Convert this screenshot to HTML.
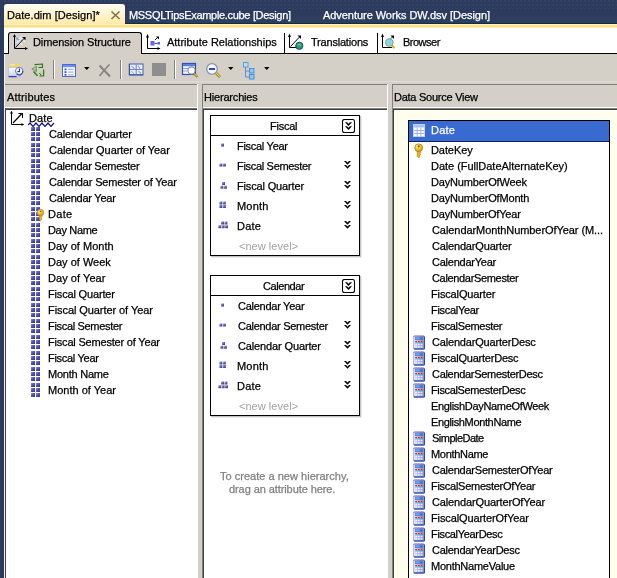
<!DOCTYPE html><html><head><meta charset="utf-8"><title>Date.dim [Design]</title><style>html,body{margin:0;padding:0}
body{width:617px;height:578px;overflow:hidden;position:relative;background:#d4d0c8;font:11px "Liberation Sans",sans-serif;color:#000}
.r{position:absolute}
.t{position:absolute;white-space:nowrap;line-height:16px;will-change:transform;-webkit-text-stroke:.25px currentColor}
#acttab{left:4px;top:4px;width:121px;height:21px;border-radius:3px 3px 0 0;background:linear-gradient(#fffdf4,#fff5d4 45%,#ffeeb4 80%,#fde9a6)}
#seltab{left:8px;top:32px;width:134px;height:22px;box-sizing:border-box;border:1px solid #000;border-bottom:none;border-radius:3px 3px 0 0;background:#d4d0c8}
.hbox{width:150px;height:141px;box-sizing:border-box;border:1px solid #000;background:#fff;box-shadow:1px 1px 0 #c4c4c4,2px 2px 0 #ececec}
</style></head><body>
<svg width="0" height="0" style="position:absolute"><defs>
<g id="i-dim"><path d="M2.500 1.500v13H14.500" fill="none" stroke="#000" stroke-width="1"/><path d="M1 3.500l1.500-2.500 1.500 2.500zM12.500 13l2.500 1.500-2.500 1.500z" fill="#000"/><path d="M4 13l9-9.500" fill="none" stroke="#000" stroke-width="1.100"/><path d="M9.500 3.500h4v4.500" fill="none" stroke="#000" stroke-width="1.100"/></g>
<g id="i-squig"><path d="M0 3l2-2 3 3.500 3-3.500 3 3.500 3-3.500 3 3.500 3-3.500 3 3.500 3-3.500" fill="none" stroke="#14148a" stroke-width="1.200"/></g>
<linearGradient id="sqg" x1="0" y1="0" x2="1" y2="1"><stop offset="0" stop-color="#9a9ae0"/><stop offset=".45" stop-color="#5252b4"/><stop offset="1" stop-color="#30308c"/></linearGradient>
<g id="i-attr"><g fill="url(#sqg)"><rect x="1" y="1" width="4" height="4"/><rect x="6" y="1" width="4" height="4"/><rect x="1" y="6" width="4" height="4"/><rect x="6" y="6" width="4" height="4"/><rect x="1" y="11" width="4" height="4"/><rect x="6" y="11" width="4" height="4"/></g></g>
<g id="i-attrkey"><use href="#i-attr"/><use href="#i-key" transform="translate(4.2,1.800) scale(.82)"/></g>
<radialGradient id="kg" cx=".35" cy=".3" r=".8"><stop offset="0" stop-color="#fff3a8"/><stop offset=".5" stop-color="#f2c428"/><stop offset="1" stop-color="#c08a10"/></radialGradient>
<g id="i-key"><path d="M6.300 8.500h2.600v1.200l1 .8-1 1 .9.900-1 1 .2 1.100-1.400 1.300-1.300-1.300z" fill="#ecb820" stroke="#b07c10" stroke-width=".7"/><circle cx="7.700" cy="5.800" r="3.900" fill="url(#kg)" stroke="#b8860f" stroke-width=".9"/><circle cx="7.700" cy="4.300" r="1.100" fill="#8a5c08"/></g>
<linearGradient id="cg" x1="0" y1="0" x2="1" y2="0"><stop offset="0" stop-color="#dfe4f6"/><stop offset=".5" stop-color="#a9b3e6"/><stop offset="1" stop-color="#7f8cd4"/></linearGradient>
<g id="i-calc"><rect x="2.500" y="2" width="11" height="13" rx="1" fill="url(#cg)" stroke="#5666b4" stroke-width="1"/><path d="M2.500 2.500v12" stroke="#b8bccc" stroke-width="1"/><path d="M13.500 3v12M3 15h10.500" stroke="#3a489c" stroke-width="1" fill="none"/><rect x="4" y="3.200" width="8" height="2.600" fill="#3a78d4"/><rect x="4.500" y="3.700" width="4" height="1" fill="#8fc0f4"/><g fill="#d62c34"><rect x="4.300" y="7" width="1.700" height="1.400"/><rect x="7" y="7" width="1.700" height="1.400"/><rect x="9.700" y="7" width="1.700" height="1.400"/></g><g fill="#eef0ff"><rect x="4.300" y="9.600" width="1.700" height="1.500"/><rect x="7" y="9.600" width="1.700" height="1.500"/><rect x="9.700" y="9.600" width="1.700" height="1.500"/><rect x="4.300" y="12.100" width="1.700" height="1.500"/><rect x="7" y="12.100" width="1.700" height="1.500"/><rect x="9.700" y="12.100" width="1.700" height="1.500"/></g><path d="M4 8.900h8" stroke="#58a890" stroke-width=".6"/></g>
<g id="i-table"><rect x="1.500" y=".5" width="11" height="12" fill="#fff" stroke="#c4d2f4" stroke-width="1"/><rect x="2" y="1" width="10" height="2.500" fill="#aac0f2"/><path d="M5.200 3.500v9M8.800 3.500v9M2 6.500h10M2 9.500h10" stroke="#9cb2e8" fill="none" stroke-width="1"/></g>
<g id="i-chev"><path d="M0 0h2l1.500 1.600L5 0h2L3.500 3.700zM0 4h2l1.500 1.600L5 4h2L3.500 7.700z" fill="#000"/></g>
<g id="i-chevbox"><rect x=".5" y=".5" width="12" height="13" rx="2" fill="#fff" stroke="#000" stroke-width="1.100"/><path d="M3 3.200h2l1.500 1.600L8 3.200h2L6.500 6.900zM3 7.200h2l1.500 1.600L8 7.200h2L6.500 10.900z" fill="#000"/></g>
<linearGradient id="dg" x1="0" y1="0" x2="1" y2="1"><stop offset="0" stop-color="#c4c4e8"/><stop offset=".45" stop-color="#6a6ab0"/><stop offset="1" stop-color="#2c2c80"/></linearGradient>
<g id="i-lv1"><rect x="3" y="4.5" width="3" height="3" fill="url(#dg)"/></g>
<g id="i-lv2"><rect x="1.3" y="4.5" width="3" height="3" fill="url(#dg)"/><rect x="4.8" y="4.5" width="3" height="3" fill="url(#dg)"/></g>
<g id="i-lv3"><rect x="4" y="3" width="3" height="3" fill="url(#dg)"/><rect x="2.3" y="6.7" width="3" height="3" fill="url(#dg)"/><rect x="5.8" y="6.7" width="3" height="3" fill="url(#dg)"/></g>
<g id="i-lv4"><rect x="1.3" y="2.5" width="3" height="3" fill="url(#dg)"/><rect x="4.8" y="2.5" width="3" height="3" fill="url(#dg)"/><rect x="1.3" y="6" width="3" height="3" fill="url(#dg)"/><rect x="4.8" y="6" width="3" height="3" fill="url(#dg)"/></g>
<g id="i-lv5"><rect x="3" y="2.5" width="3" height="3" fill="url(#dg)"/><rect x="6.4" y="2.5" width="3" height="3" fill="url(#dg)"/><rect x="0.2" y="6.2" width="3" height="3" fill="url(#dg)"/><rect x="3.6" y="6.2" width="3" height="3" fill="url(#dg)"/><rect x="7" y="6.2" width="3" height="3" fill="url(#dg)"/></g>
</defs></svg>

<div class="r" style="left:0px;top:0px;width:617px;height:24px;background:#2d3c5e;"></div>
<div class="r" style="left:0px;top:0px;width:617px;height:9px;background:radial-gradient(circle at 1px 1px,rgba(255,255,255,.035) 0,rgba(255,255,255,.035) 1px,transparent 1.4px) 0 0/4px 4px;"></div>
<div class="r" style="left:0px;top:17px;width:617px;height:2px;background:#343a59;"></div>
<div class="r" style="left:0px;top:19px;width:617px;height:4px;background:#254060;"></div>
<div class="r" style="left:0px;top:23px;width:617px;height:1px;background:#1c2a3c;"></div>
<div class="r" id="acttab"></div>
<div class="r" style="left:4px;top:24px;width:613px;height:4px;background:linear-gradient(#fff0c0 0,#fff0c0 25%,#fbe08c 25%,#fbe08c 75%,#fdeeb8 75%);"></div>
<div class="r" style="left:4px;top:28px;width:613px;height:26px;background:#fff;"></div>
<div class="r" style="left:0px;top:0px;width:4px;height:578px;background:#2d3c5e;"></div>
<div class="r" style="left:4px;top:54px;width:1px;height:524px;background:#f2f1ec;"></div>
<span class="t" style="left:6.8px;top:7px;letter-spacing:0.070px;">Date.dim [Design]*</span>
<svg class="r" style="left:110px;top:10px" width="11" height="10"><path d="M1.500 1.500l8 7.500M9.500 1.500l-8 7.500" stroke="#7e6e44" stroke-width="1.500" fill="none"/></svg>
<span class="t" style="left:128.7px;top:7px;letter-spacing:-0.316px;color:#fff">MSSQLTipsExample.cube [Design]</span>
<span class="t" style="left:323.0px;top:7px;letter-spacing:-0.050px;color:#fff">Adventure Works DW.dsv [Design]</span>
<div class="r" style="left:4px;top:53px;width:613px;height:1px;background:#000;"></div>
<div class="r" id="seltab"></div>
<span class="t" style="left:33.4px;top:34px;letter-spacing:-0.102px;">Dimension Structure</span>
<span class="t" style="left:167.3px;top:34px;letter-spacing:-0.014px;">Attribute Relationships</span>
<span class="t" style="left:310.7px;top:34px;letter-spacing:-0.200px;">Translations</span>
<span class="t" style="left:403.0px;top:34px;letter-spacing:-0.500px;">Browser</span>
<div class="r" style="left:284px;top:33px;width:1px;height:20px;background:#000;"></div>
<div class="r" style="left:377px;top:33px;width:1px;height:20px;background:#000;"></div>
<!-- tab icons -->
<svg class="r" style="left:12px;top:33px" width="17" height="17" viewBox="0 0 17 17"><path d="M5 6l5-3 3 1 1 4-4 4-5-1z" fill="#e6ecf8" opacity=".8"/><path d="M9 7l4 5" stroke="#d8cf9a" stroke-width="2"/><path d="M4 5l3 2" stroke="#7fa0e0" stroke-width="2"/><path d="M2.5 2v13.5H15" fill="none" stroke="#000"/><path d="M1 4l1.5-3L4 4zM13 14l3 1.5-3 1.5z" fill="#000"/><path d="M3.5 14.500l8-8.500" stroke="#000" fill="none"/><path d="M10 4h3.500v3.500z" fill="#000"/></svg>
<svg class="r" style="left:145px;top:33px" width="17" height="17" viewBox="0 0 17 17"><path d="M2.500 2v13.500H15" fill="none" stroke="#000"/><path d="M1 4.500l1.500-3.500L4 4.500zM12.500 14l3 1.500-3 1.500z" fill="#000"/><rect x="5.500" y="8" width="4" height="4.500" fill="#6464ec"/><rect x="12.500" y="9" width="2.500" height="2.500" fill="#5a5ae0"/><path d="M9.500 10.500h3" stroke="#4848d0"/><path d="M10 7l3-3" stroke="#000"/><path d="M11 3.500h3v3z" fill="#000"/></svg>
<svg class="r" style="left:287px;top:33px" width="18" height="17" viewBox="0 0 18 17"><path d="M2.500 2v12.500H9" fill="none" stroke="#000"/><path d="M1 4l1.500-3.500L4 4z" fill="#000"/><path d="M3.500 13.500l9-9.500" stroke="#000"/><path d="M10.500 2.500h3.500v3.500z" fill="#000"/><circle cx="12.300" cy="12.800" r="3.600" fill="#22a860" stroke="#1c3c9c" stroke-width="1"/><path d="M10.500 12q2-1.500 3.500.5" stroke="#7be0a0" fill="none"/></svg>
<svg class="r" style="left:380px;top:33px" width="18" height="17" viewBox="0 0 18 17"><path d="M2.500 2v12.500H12" fill="none" stroke="#000"/><path d="M1 4l1.500-3.500L4 4z" fill="#000"/><circle cx="9.300" cy="9.500" r="3.800" fill="#84dcdc" stroke="#8a9aa0" stroke-width="1"/><path d="M11 5.500l1.500-1.500" stroke="#000"/><path d="M10.500 2.500h3.500v3.500z" fill="#000"/><path d="M12 12.500l2.500 2.500" stroke="#d8b400" stroke-width="2.200"/></svg>
<!-- toolbar -->
<svg class="r" style="left:8px;top:62px" width="17" height="17" viewBox="0 0 17 17"><defs><linearGradient id="bx" x1="0" y1="0" x2="0" y2="1"><stop offset="0" stop-color="#ffffff"/><stop offset="1" stop-color="#c9d0f4"/></linearGradient></defs><rect x="1.500" y="1.800" width="11" height="3.600" rx="1.200" fill="#ead668"/><rect x="2" y="2.200" width="5" height="1.400" fill="#f6eca0"/><rect x=".8" y="5.300" width="11.500" height="9.500" fill="url(#bx)" stroke="#aab2e4" stroke-width=".6"/><path d="M.6 14.600h8" stroke="#3a44a8" stroke-width="1.300"/><circle cx="11.200" cy="9" r="3.700" fill="#fbfcff" stroke="#6a74cc" stroke-width="1"/><path d="M8.800 12a3.700 3.700 0 0 0 6.100-3" fill="none" stroke="#3c469c" stroke-width="1.200"/><path d="M11.500 6.600v3h-2.200" stroke="#2c3690" stroke-width="1.200" fill="none"/></svg>
<svg class="r" style="left:30px;top:62px" width="16" height="16" viewBox="0 0 16 16"><rect x="9.300" y="2.800" width="3" height="2.400" fill="#b4dc98"/><rect x="10" y="9.500" width="3.200" height="4.300" fill="#b4dc98"/><path d="M4.500 2.600L12.500 2V5.500H8.500" fill="none" stroke="#3f6e2c" stroke-width="1.100"/><path d="M13.600 7.400V14H9.500" fill="none" stroke="#3f6e2c" stroke-width="1.200"/><path d="M1.800 7l4.700-2.800v5.300z" fill="#9ccc80" stroke="#5a8a44" stroke-width=".7"/><path d="M3.500 9.500L7.500 13.800" stroke="#3f6e2c" stroke-width="1.500"/><path d="M9.300 11l2 2.500" stroke="#3f6e2c" stroke-width="1"/></svg>
<svg class="r" style="left:61px;top:63px" width="16" height="15" viewBox="0 0 16 15"><rect x="1.500" y="1.500" width="13" height="12" fill="#fbfcff" stroke="#4c6ad6" stroke-width="1"/><rect x="2" y="2" width="12" height="2.200" fill="#6f8fe8"/><g fill="#3c58c0"><rect x="3.500" y="5.500" width="2" height="1.800"/><rect x="3.500" y="8.200" width="2" height="1.800"/><rect x="3.500" y="10.900" width="2" height="1.800"/></g><path d="M7 6.400h5.500M7 9.100h5.500M7 11.800h5.500" stroke="#a2b4ec" stroke-width="1.200"/></svg>
<svg class="r" style="left:84px;top:67px" width="6" height="4"><path d="M0 0h5.500L2.750 3z" fill="#000"/></svg>
<svg class="r" style="left:98px;top:63px" width="14" height="15" viewBox="0 0 14 15"><path d="M1.500 2.500l10.500 11" stroke="#858585" stroke-width="2" fill="none"/><path d="M11.500 1.500Q7 6 1.500 13" stroke="#858585" stroke-width="1.700" fill="none"/></svg>
<svg class="r" style="left:128px;top:63px" width="16" height="13" viewBox="0 0 16 13"><rect x="1.500" y="1" width="13.500" height="11" fill="#eef1fc" stroke="#5a70bc" stroke-width="1.200"/><path d="M1.500 11.800h13.500M1.300 1v11" stroke="#3c4e96" stroke-width="1" fill="none"/><path d="M8.200 1.500v10M2 6.500h12.500" stroke="#6c84d0" stroke-width="1.100"/><path d="M3.500 3l3 3M10 2.500l2 3.500M3.500 8l2.500 3M10.500 8l2.500 2.500" stroke="#93a4de" stroke-width="1.100"/></svg>
<div class="r" style="left:152px;top:63px;width:14px;height:13px;background:#8e8e8e"></div>
<svg class="r" style="left:181px;top:62px" width="19" height="17" viewBox="0 0 19 17"><rect x="1.500" y="1.500" width="13" height="11" fill="#f4f7ff" stroke="#2f4fb8" stroke-width="1.200"/><rect x="2" y="2" width="12" height="2.200" fill="#5f7fe0"/><path d="M2 6.500h5M2 9h4" stroke="#8aa0e0"/><circle cx="10.500" cy="8.500" r="3.600" fill="#fff" stroke="#7a8aa8" stroke-width="1.100"/><path d="M13 11.500l3.500 3.500" stroke="#a08420" stroke-width="2.300"/><path d="M13 11.300l3.300 3.300" stroke="#e8c840" stroke-width="1"/></svg>
<svg class="r" style="left:205px;top:62px" width="17" height="17" viewBox="0 0 17 17"><circle cx="7" cy="7" r="5.300" fill="#f6f8ff" stroke="#8894b0" stroke-width="1.300"/><path d="M4 7h6" stroke="#3848b8" stroke-width="2"/><path d="M11 11l4 4" stroke="#9a8020" stroke-width="2.600"/><path d="M11 10.800l3.800 3.800" stroke="#ecd050" stroke-width="1.100"/></svg>
<svg class="r" style="left:228px;top:67px" width="6" height="4"><path d="M0 0h5.500L2.750 3z" fill="#000"/></svg>
<svg class="r" style="left:242px;top:61px" width="14" height="19" viewBox="0 0 14 19"><path d="M3.500 5v11h4M3.500 10h4" fill="none" stroke="#6a8ad0" stroke-width="1"/><rect x="1.500" y="1.500" width="4.500" height="4.500" fill="#bfe0fa" stroke="#5a9ad8"/><rect x="7.500" y="7.500" width="4.500" height="4.500" fill="#8cc8f4" stroke="#4a90d8"/><rect x="7.500" y="13.500" width="4.500" height="4.500" fill="#8cc8f4" stroke="#4a90d8"/></svg>
<svg class="r" style="left:264px;top:67px" width="6" height="4"><path d="M0 0h5.500L2.750 3z" fill="#000"/></svg>

<div class="r" style="left:5px;top:81px;width:612px;height:1px;background:#e0ddd6;"></div>
<div class="r" style="left:5px;top:84px;width:612px;height:1px;background:#808080;"></div>
<div class="r" style="left:53px;top:60px;width:1px;height:19px;background:#808080;box-shadow:1px 0 0 #fff"></div>
<div class="r" style="left:120px;top:60px;width:1px;height:19px;background:#808080;box-shadow:1px 0 0 #fff"></div>
<div class="r" style="left:174px;top:60px;width:1px;height:19px;background:#808080;box-shadow:1px 0 0 #fff"></div>
<div class="r" style="left:5px;top:107px;width:192px;height:1px;background:#fff;"></div>
<div class="r" style="left:202px;top:107px;width:185px;height:1px;background:#fff;"></div>
<div class="r" style="left:392px;top:107px;width:225px;height:1px;background:#fff;"></div>
<div class="r" style="left:197px;top:84px;width:1px;height:494px;background:#fff;"></div>
<div class="r" style="left:387px;top:84px;width:1px;height:494px;background:#fff;"></div>
<div class="r" style="left:198px;top:84px;width:4px;height:1px;background:#d4d0c8;"></div>
<div class="r" style="left:388px;top:84px;width:4px;height:1px;background:#d4d0c8;"></div>
<div class="r" style="left:202px;top:84px;width:1px;height:24px;background:#808080;"></div>
<div class="r" style="left:392px;top:84px;width:1px;height:24px;background:#808080;"></div>
<span class="t" style="left:7.3px;top:89px;letter-spacing:0.184px;">Attributes</span>
<span class="t" style="left:204.3px;top:89px;letter-spacing:-0.183px;">Hierarchies</span>
<span class="t" style="left:394.3px;top:89px;letter-spacing:-0.256px;">Data Source View</span>
<div class="r" style="left:5px;top:108px;width:192px;height:470px;background:#fff;border-top:2px solid #404040;border-left:1px solid #404040;border-top-color:#6a6a6a;box-sizing:border-box"></div>
<div class="r" style="left:5px;top:109px;width:192px;height:1px;background:#404040;"></div>
<svg class="r" style="left:9px;top:110px" width="16" height="16"><use href="#i-dim"/></svg>
<span class="t" style="left:28.8px;top:110px;letter-spacing:0.114px;">Date</span>
<svg class="r" style="left:28px;top:122px" width="27" height="5"><use href="#i-squig"/></svg>
<svg class="r" style="left:30px;top:126px" width="16" height="16"><use href="#i-attr"/></svg>
<span class="t" style="left:48.7px;top:126px;letter-spacing:-0.146px;">Calendar Quarter</span>
<svg class="r" style="left:30px;top:142px" width="16" height="16"><use href="#i-attr"/></svg>
<span class="t" style="left:48.7px;top:142px;letter-spacing:-0.065px;">Calendar Quarter of Year</span>
<svg class="r" style="left:30px;top:158px" width="16" height="16"><use href="#i-attr"/></svg>
<span class="t" style="left:48.7px;top:158px;letter-spacing:-0.259px;">Calendar Semester</span>
<svg class="r" style="left:30px;top:174px" width="16" height="16"><use href="#i-attr"/></svg>
<span class="t" style="left:48.7px;top:174px;letter-spacing:-0.174px;">Calendar Semester of Year</span>
<svg class="r" style="left:30px;top:190px" width="16" height="16"><use href="#i-attr"/></svg>
<span class="t" style="left:48.7px;top:190px;letter-spacing:-0.243px;">Calendar Year</span>
<svg class="r" style="left:30px;top:206px" width="16" height="16"><use href="#i-attrkey"/></svg>
<span class="t" style="left:47.7px;top:206px;letter-spacing:0.284px;">Date</span>
<svg class="r" style="left:30px;top:222px" width="16" height="16"><use href="#i-attr"/></svg>
<span class="t" style="left:47.7px;top:222px;letter-spacing:-0.334px;">Day Name</span>
<svg class="r" style="left:30px;top:238px" width="16" height="16"><use href="#i-attr"/></svg>
<span class="t" style="left:47.7px;top:238px;letter-spacing:0.021px;">Day of Month</span>
<svg class="r" style="left:30px;top:254px" width="16" height="16"><use href="#i-attr"/></svg>
<span class="t" style="left:47.7px;top:254px;letter-spacing:0.008px;">Day of Week</span>
<svg class="r" style="left:30px;top:270px" width="16" height="16"><use href="#i-attr"/></svg>
<span class="t" style="left:47.7px;top:270px;letter-spacing:0.051px;">Day of Year</span>
<svg class="r" style="left:30px;top:286px" width="16" height="16"><use href="#i-attr"/></svg>
<span class="t" style="left:47.7px;top:286px;letter-spacing:-0.169px;">Fiscal Quarter</span>
<svg class="r" style="left:30px;top:302px" width="16" height="16"><use href="#i-attr"/></svg>
<span class="t" style="left:47.7px;top:302px;letter-spacing:-0.071px;">Fiscal Quarter of Year</span>
<svg class="r" style="left:30px;top:318px" width="16" height="16"><use href="#i-attr"/></svg>
<span class="t" style="left:47.7px;top:318px;letter-spacing:-0.321px;">Fiscal Semester</span>
<svg class="r" style="left:30px;top:334px" width="16" height="16"><use href="#i-attr"/></svg>
<span class="t" style="left:47.7px;top:334px;letter-spacing:-0.190px;">Fiscal Semester of Year</span>
<svg class="r" style="left:30px;top:350px" width="16" height="16"><use href="#i-attr"/></svg>
<span class="t" style="left:47.7px;top:350px;letter-spacing:-0.292px;">Fiscal Year</span>
<svg class="r" style="left:30px;top:366px" width="16" height="16"><use href="#i-attr"/></svg>
<span class="t" style="left:47.7px;top:366px;letter-spacing:-0.229px;">Month Name</span>
<svg class="r" style="left:30px;top:382px" width="16" height="16"><use href="#i-attr"/></svg>
<span class="t" style="left:47.7px;top:382px;letter-spacing:0.007px;">Month of Year</span>
<div class="r" style="left:202px;top:108px;width:185px;height:470px;background:#fff;border-top:1px solid #808080;border-left:1px solid #808080;box-sizing:border-box"></div>
<div class="r" style="left:203px;top:109px;width:184px;height:1px;background:#404040;"></div>
<div class="r" style="left:203px;top:109px;width:1px;height:469px;background:#404040;"></div>
<div class="r hbox" style="left:210px;top:115px"></div>
<div class="r" style="left:211px;top:135px;width:148px;height:1px;background:#000;"></div>
<span class="t" style="left:270.4px;top:118px;letter-spacing:-0.234px;">Fiscal</span>
<svg class="r" style="left:342px;top:119px" width="14" height="15"><use href="#i-chevbox"/></svg>
<svg class="r" style="left:218px;top:139px" width="12" height="12"><use href="#i-lv1"/></svg>
<span class="t" style="left:236.6px;top:138px;letter-spacing:-0.283px;">Fiscal Year</span>
<svg class="r" style="left:218px;top:159px" width="12" height="12"><use href="#i-lv2"/></svg>
<span class="t" style="left:236.6px;top:158px;letter-spacing:-0.309px;">Fiscal Semester</span>
<svg class="r" style="left:344px;top:161px" width="8" height="9"><use href="#i-chev"/></svg>
<svg class="r" style="left:218px;top:179px" width="12" height="12"><use href="#i-lv3"/></svg>
<span class="t" style="left:236.6px;top:178px;letter-spacing:-0.155px;">Fiscal Quarter</span>
<svg class="r" style="left:344px;top:181px" width="8" height="9"><use href="#i-chev"/></svg>
<svg class="r" style="left:218px;top:199px" width="12" height="12"><use href="#i-lv4"/></svg>
<span class="t" style="left:236.6px;top:198px;letter-spacing:0.208px;">Month</span>
<svg class="r" style="left:344px;top:201px" width="8" height="9"><use href="#i-chev"/></svg>
<svg class="r" style="left:218px;top:219px" width="12" height="12"><use href="#i-lv5"/></svg>
<span class="t" style="left:236.6px;top:218px;letter-spacing:0.226px;">Date</span>
<svg class="r" style="left:344px;top:221px" width="8" height="9"><use href="#i-chev"/></svg>
<span class="t" style="left:239.2px;top:238px;letter-spacing:0.036px;color:#a2a2a2;-webkit-text-stroke:0">&lt;new level&gt;</span>
<div class="r hbox" style="left:210px;top:275px"></div>
<div class="r" style="left:211px;top:295px;width:148px;height:1px;background:#000;"></div>
<span class="t" style="left:263.0px;top:278px;letter-spacing:-0.429px;">Calendar</span>
<svg class="r" style="left:342px;top:279px" width="14" height="15"><use href="#i-chevbox"/></svg>
<svg class="r" style="left:218px;top:299px" width="12" height="12"><use href="#i-lv1"/></svg>
<span class="t" style="left:237.6px;top:298px;letter-spacing:-0.264px;">Calendar Year</span>
<svg class="r" style="left:218px;top:319px" width="12" height="12"><use href="#i-lv2"/></svg>
<span class="t" style="left:237.6px;top:318px;letter-spacing:-0.281px;">Calendar Semester</span>
<svg class="r" style="left:344px;top:321px" width="8" height="9"><use href="#i-chev"/></svg>
<svg class="r" style="left:218px;top:339px" width="12" height="12"><use href="#i-lv3"/></svg>
<span class="t" style="left:237.6px;top:338px;letter-spacing:-0.133px;">Calendar Quarter</span>
<svg class="r" style="left:344px;top:341px" width="8" height="9"><use href="#i-chev"/></svg>
<svg class="r" style="left:218px;top:359px" width="12" height="12"><use href="#i-lv4"/></svg>
<span class="t" style="left:236.6px;top:358px;letter-spacing:0.208px;">Month</span>
<svg class="r" style="left:344px;top:361px" width="8" height="9"><use href="#i-chev"/></svg>
<svg class="r" style="left:218px;top:379px" width="12" height="12"><use href="#i-lv5"/></svg>
<span class="t" style="left:236.6px;top:378px;letter-spacing:0.226px;">Date</span>
<svg class="r" style="left:344px;top:381px" width="8" height="9"><use href="#i-chev"/></svg>
<span class="t" style="left:239.2px;top:398px;letter-spacing:0.036px;color:#a2a2a2;-webkit-text-stroke:0">&lt;new level&gt;</span>
<span class="t" style="left:220.3px;top:468px;letter-spacing:0.020px;color:#808080">To create a new hierarchy,</span>
<span class="t" style="left:228.8px;top:481px;letter-spacing:-0.083px;color:#808080">drag an attribute here.</span>
<div class="r" style="left:392px;top:108px;width:225px;height:470px;background:#fffdee;border-top:1px solid #808080;border-left:1px solid #808080;box-sizing:border-box"></div>
<div class="r" style="left:393px;top:109px;width:224px;height:1px;background:#404040;"></div>
<div class="r" style="left:393px;top:109px;width:1px;height:469px;background:#404040;"></div>
<div class="r" style="left:408px;top:120px;width:202px;height:470px;background:#fff;border:1px solid #000;box-sizing:border-box"></div>
<div class="r" style="left:409px;top:121px;width:200px;height:20px;background:#386ad0;"></div>
<div class="r" style="left:409px;top:141px;width:200px;height:1px;background:#10205a;"></div>
<svg class="r" style="left:412px;top:124px" width="14" height="13"><use href="#i-table"/></svg>
<span class="t" style="left:430.6px;top:122px;letter-spacing:0.226px;color:#fff">Date</span>
<svg class="r" style="left:411px;top:142px" width="16" height="16"><use href="#i-key"/></svg>
<span class="t" style="left:430.8px;top:142px;letter-spacing:-0.085px;">DateKey</span>
<span class="t" style="left:430.8px;top:158px;letter-spacing:-0.032px;">Date (FullDateAlternateKey)</span>
<span class="t" style="left:430.8px;top:174px;letter-spacing:-0.167px;">DayNumberOfWeek</span>
<span class="t" style="left:430.8px;top:190px;letter-spacing:-0.166px;">DayNumberOfMonth</span>
<span class="t" style="left:430.8px;top:206px;letter-spacing:-0.190px;">DayNumberOfYear</span>
<span class="t" style="left:431.8px;top:222px;letter-spacing:-0.071px;">CalendarMonthNumberOfYear (M...</span>
<span class="t" style="left:431.8px;top:238px;letter-spacing:-0.167px;">CalendarQuarter</span>
<span class="t" style="left:431.8px;top:254px;letter-spacing:-0.242px;">CalendarYear</span>
<span class="t" style="left:431.8px;top:270px;letter-spacing:-0.333px;">CalendarSemester</span>
<span class="t" style="left:430.8px;top:286px;letter-spacing:-0.138px;">FiscalQuarter</span>
<span class="t" style="left:430.8px;top:302px;letter-spacing:-0.298px;">FiscalYear</span>
<span class="t" style="left:430.8px;top:318px;letter-spacing:-0.332px;">FiscalSemester</span>
<svg class="r" style="left:411px;top:334px" width="16" height="16"><use href="#i-calc"/></svg>
<span class="t" style="left:431.8px;top:334px;letter-spacing:-0.176px;">CalendarQuarterDesc</span>
<svg class="r" style="left:411px;top:350px" width="16" height="16"><use href="#i-calc"/></svg>
<span class="t" style="left:430.8px;top:350px;letter-spacing:-0.219px;">FiscalQuarterDesc</span>
<svg class="r" style="left:411px;top:366px" width="16" height="16"><use href="#i-calc"/></svg>
<span class="t" style="left:431.8px;top:366px;letter-spacing:-0.307px;">CalendarSemesterDesc</span>
<svg class="r" style="left:411px;top:382px" width="16" height="16"><use href="#i-calc"/></svg>
<span class="t" style="left:430.8px;top:382px;letter-spacing:-0.363px;">FiscalSemesterDesc</span>
<span class="t" style="left:430.8px;top:398px;letter-spacing:-0.325px;">EnglishDayNameOfWeek</span>
<span class="t" style="left:430.8px;top:414px;letter-spacing:-0.356px;">EnglishMonthName</span>
<svg class="r" style="left:411px;top:430px" width="16" height="16"><use href="#i-calc"/></svg>
<span class="t" style="left:431.8px;top:430px;letter-spacing:-0.517px;">SimpleDate</span>
<svg class="r" style="left:411px;top:446px" width="16" height="16"><use href="#i-calc"/></svg>
<span class="t" style="left:430.8px;top:446px;letter-spacing:-0.311px;">MonthName</span>
<svg class="r" style="left:411px;top:462px" width="16" height="16"><use href="#i-calc"/></svg>
<span class="t" style="left:431.8px;top:462px;letter-spacing:-0.230px;">CalendarSemesterOfYear</span>
<svg class="r" style="left:411px;top:478px" width="16" height="16"><use href="#i-calc"/></svg>
<span class="t" style="left:430.8px;top:478px;letter-spacing:-0.272px;">FiscalSemesterOfYear</span>
<svg class="r" style="left:411px;top:494px" width="16" height="16"><use href="#i-calc"/></svg>
<span class="t" style="left:431.8px;top:494px;letter-spacing:-0.134px;">CalendarQuarterOfYear</span>
<svg class="r" style="left:411px;top:510px" width="16" height="16"><use href="#i-calc"/></svg>
<span class="t" style="left:430.8px;top:510px;letter-spacing:-0.111px;">FiscalQuarterOfYear</span>
<svg class="r" style="left:411px;top:526px" width="16" height="16"><use href="#i-calc"/></svg>
<span class="t" style="left:430.8px;top:526px;letter-spacing:-0.332px;">FiscalYearDesc</span>
<svg class="r" style="left:411px;top:542px" width="16" height="16"><use href="#i-calc"/></svg>
<span class="t" style="left:431.8px;top:542px;letter-spacing:-0.265px;">CalendarYearDesc</span>
<svg class="r" style="left:411px;top:558px" width="16" height="16"><use href="#i-calc"/></svg>
<span class="t" style="left:430.8px;top:558px;letter-spacing:-0.243px;">MonthNameValue</span>
</body></html>
